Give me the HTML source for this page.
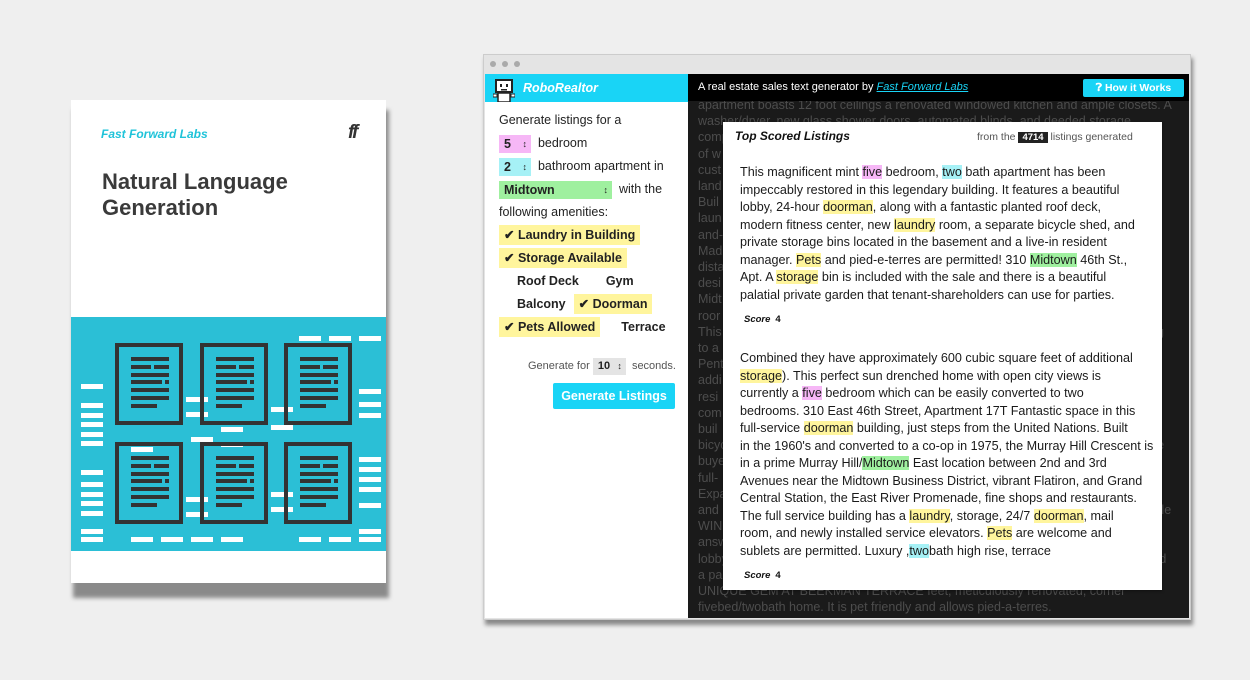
<!DOCTYPE html>
<html><head><meta charset="utf-8"><style>
*{margin:0;padding:0;box-sizing:border-box}
body{width:1250px;height:680px;background:#efefef;position:relative;overflow:hidden;font-family:"Liberation Sans",sans-serif}
.abs{position:absolute}
.y{background:#fff59d}.p{background:#f6b7f6}.c{background:#a6f1f6}.g{background:#9ff09f}
#side div.r{position:absolute;left:14px;font-size:12.5px;color:#222;height:20px;line-height:20px;white-space:nowrap}
.sel{display:inline-block;height:18px;line-height:18px;font-weight:bold;padding-left:5px;position:relative;vertical-align:middle}
.sel::after{content:"\2195";position:absolute;right:4px;font-size:9px;font-weight:normal}
.am{display:inline-block;font-weight:bold;padding:0 5px;height:20px;line-height:20px}
#bg{position:absolute;left:698px;top:97px;width:485px;height:519px;overflow:hidden;color:#4d4d4d;font-size:12.5px;line-height:16.2px;white-space:nowrap}
#modal{position:absolute;left:723px;top:122px;width:439px;height:468px;background:#fff;box-shadow:0 1px 3px rgba(0,0,0,.4)}
.txt{position:absolute;left:17px;width:420px;font-size:12.6px;line-height:17.55px;color:#1a1a1a;white-space:nowrap}
.score{position:absolute;left:21px;font-size:9.5px;font-style:italic;font-weight:bold;color:#111}
.score b{font-style:normal;margin-left:5px}
</style></head><body>

<!-- book -->
<div class="abs" style="left:73px;top:110px;width:316px;height:488px;background:#8a8a8a;filter:blur(2px)"></div>
<div class="abs" style="left:71px;top:100px;width:315px;height:483px;background:#fff"></div>
<div class="abs" style="left:101px;top:127px;font-size:12px;font-style:italic;font-weight:bold;color:#1fc3d9">Fast Forward Labs</div>
<div class="abs" style="left:348px;top:122px;font-size:19px;font-weight:bold;color:#333;letter-spacing:-2px;font-style:italic">ff</div>
<div class="abs" style="left:102px;top:169px;font-size:22px;font-weight:bold;color:#3a3a3a;line-height:26px">Natural Language<br>Generation</div>
<svg class="abs" style="left:71px;top:317px" width="315" height="234" viewBox="0 0 315 234">
<rect width="315" height="234" fill="#2bbfd6"/>
<g fill="#fff">
<rect x="10" y="67" width="22" height="5"/><rect x="10" y="86" width="22" height="5"/><rect x="10" y="96" width="22" height="5"/><rect x="10" y="105" width="22" height="5"/><rect x="10" y="115" width="22" height="5"/><rect x="10" y="124" width="22" height="5"/>
<rect x="10" y="153" width="22" height="5"/><rect x="10" y="165" width="22" height="5"/><rect x="10" y="175" width="22" height="5"/><rect x="10" y="184" width="22" height="5"/><rect x="10" y="194" width="22" height="5"/>
<rect x="10" y="212" width="22" height="5"/><rect x="10" y="220" width="22" height="5"/>
<rect x="228" y="19" width="22" height="5"/><rect x="258" y="19" width="22" height="5"/><rect x="288" y="19" width="22" height="5"/>
<rect x="288" y="72" width="22" height="5"/><rect x="288" y="85" width="22" height="5"/><rect x="288" y="96" width="22" height="5"/>
<rect x="288" y="140" width="22" height="5"/><rect x="288" y="150" width="22" height="5"/><rect x="288" y="160" width="22" height="5"/><rect x="288" y="170" width="22" height="5"/><rect x="288" y="186" width="22" height="5"/>
<rect x="288" y="212" width="22" height="5"/><rect x="288" y="220" width="22" height="5"/>
<rect x="60" y="220" width="22" height="5"/><rect x="90" y="220" width="22" height="5"/><rect x="120" y="220" width="22" height="5"/><rect x="150" y="220" width="22" height="5"/>
<rect x="228" y="220" width="22" height="5"/><rect x="258" y="220" width="22" height="5"/>
<rect x="115" y="80" width="22" height="5"/><rect x="115" y="95" width="22" height="5"/><rect x="200" y="90" width="22" height="5"/><rect x="200" y="108" width="22" height="5"/>
<rect x="115" y="180" width="22" height="5"/><rect x="115" y="195" width="22" height="5"/><rect x="200" y="175" width="22" height="5"/><rect x="200" y="190" width="22" height="5"/>
<rect x="150" y="110" width="22" height="5"/><rect x="120" y="120" width="22" height="5"/><rect x="60" y="130" width="22" height="5"/><rect x="150" y="125" width="22" height="5"/>
</g>
<g fill="none" stroke="#333" stroke-width="4">
<rect x="46" y="28" width="64" height="78"/><rect x="131" y="28" width="64" height="78"/><rect x="215" y="28" width="64" height="78"/>
<rect x="46" y="127" width="64" height="78"/><rect x="131" y="127" width="64" height="78"/><rect x="215" y="127" width="64" height="78"/>
</g>
<g fill="#333">
<g id="t"><rect x="60" y="40" width="38" height="4"/><rect x="60" y="48" width="20" height="4"/><rect x="83" y="48" width="15" height="4"/><rect x="60" y="56" width="38" height="4"/><rect x="60" y="63" width="31" height="4"/><rect x="94" y="63" width="4" height="4"/><rect x="60" y="71" width="38" height="4"/><rect x="60" y="79" width="38" height="4"/><rect x="60" y="87" width="26" height="4"/></g>
<use href="#t" x="85"/><use href="#t" x="169"/><use href="#t" y="99"/><use href="#t" x="85" y="99"/><use href="#t" x="169" y="99"/>
</g>
</svg>

<!-- browser -->
<div class="abs" style="left:485px;top:58px;width:708px;height:567px;background:#888;filter:blur(2px)"></div>
<div class="abs" style="left:483px;top:54px;width:708px;height:566px;background:#e4e4e4;border:1px solid #ccc"></div>
<div class="abs" style="left:490px;top:61px;width:6px;height:6px;border-radius:50%;background:#aaa;box-shadow:12px 0 #aaa,24px 0 #aaa"></div>
<div id="side" class="abs" style="left:485px;top:74px;width:203px;height:544px;background:#fff">
 <div class="abs" style="left:0;top:0;width:203px;height:28px;background:#19d4f6"></div>
 <svg class="abs" style="left:8px;top:4px" width="22" height="24" viewBox="0 0 22 24"><rect x="3" y="2" width="16" height="12" fill="#fff" stroke="#222" stroke-width="2"/><rect x="7" y="6" width="2" height="3" fill="#222"/><rect x="13" y="6" width="2" height="3" fill="#222"/><rect x="8" y="11" width="6" height="1.5" fill="#222"/><rect x="5" y="15" width="12" height="9" fill="#fff" stroke="#222" stroke-width="1.5"/><rect x="0" y="16" width="4" height="3" fill="#fff" stroke="#222"/><rect x="18" y="16" width="4" height="3" fill="#fff" stroke="#222"/></svg>
 <div class="abs" style="left:38px;top:7px;color:#fff;font-weight:bold;font-style:italic;font-size:12.5px">RoboRealtor</div>
 <div class="r" style="top:36px">Generate listings for a</div>
 <div class="r" style="top:59px"><span class="sel p" style="width:32px">5</span>&nbsp; bedroom</div>
 <div class="r" style="top:82px"><span class="sel c" style="width:32px">2</span>&nbsp; bathroom apartment in</div>
 <div class="r" style="top:105px"><span class="sel g" style="width:113px">Midtown</span>&nbsp; with the</div>
 <div class="r" style="top:128px">following amenities:</div>
 <div class="r" style="top:151px;left:14px"><span class="am y">✔ Laundry in Building</span></div>
 <div class="r" style="top:174px;left:14px"><span class="am y">✔ Storage Available</span></div>
 <div class="r" style="top:197px;left:14px"><span class="am" style="padding-left:18px">Roof Deck</span><span class="am" style="margin-left:17px">Gym</span></div>
 <div class="r" style="top:220px;left:14px"><span class="am" style="padding-left:18px">Balcony</span><span class="am y" style="margin-left:3px">✔ Doorman</span></div>
 <div class="r" style="top:243px;left:14px"><span class="am y">✔ Pets Allowed</span><span class="am" style="margin-left:16px">Terrace</span></div>
 <div class="r" style="top:282px;left:43px;font-size:11px;color:#555">Generate for <span class="sel" style="width:33px;background:#e4e4e4;color:#222;height:17px;line-height:17px">10</span>&nbsp; seconds.</div>
 <div class="abs" style="left:68px;top:309px;width:122px;height:26px;background:#19d4f6;color:#fff;font-weight:bold;font-size:12.5px;text-align:center;line-height:26px;border-radius:2px">Generate Listings</div>
</div>
<div class="abs" style="left:688px;top:74px;width:501px;height:544px;background:#1a1a1a"></div>
<div id="bg">apartment boasts 12 foot ceilings a renovated windowed kitchen and ample closets. A<br>washer/dryer, new glass shower doors, automated blinds, and deeded storage<br>complete this home. Located in a landmark building on a tree lined street just off<br>of w<br>cust<br>land<br>Buil<br>laun<br>and-<br>Mad<br>dista<br>desi<br>Midt<br>roor<br>This magnificent home is a short walk from everything. The building features parking<br>to a<br>Pent<br>addi<br>resi&nbsp;&nbsp;&nbsp;&nbsp;&nbsp;&nbsp;&nbsp;&nbsp;&nbsp;&nbsp;&nbsp;&nbsp;&nbsp;&nbsp;&nbsp;&nbsp;&nbsp;&nbsp;&nbsp;&nbsp;&nbsp;&nbsp;&nbsp;&nbsp;&nbsp;&nbsp;&nbsp;&nbsp;&nbsp;&nbsp;&nbsp;&nbsp;&nbsp;&nbsp;&nbsp;&nbsp;&nbsp;&nbsp;&nbsp;&nbsp;&nbsp;&nbsp;&nbsp;&nbsp;&nbsp;&nbsp;&nbsp;&nbsp;&nbsp;&nbsp;&nbsp;&nbsp;&nbsp;&nbsp;&nbsp;&nbsp;&nbsp;&nbsp;&nbsp;&nbsp;&nbsp;&nbsp;&nbsp;&nbsp;&nbsp;&nbsp;&nbsp;&nbsp;&nbsp;&nbsp;&nbsp;&nbsp;&nbsp;&nbsp;&nbsp;&nbsp;&nbsp;&nbsp;&nbsp;&nbsp;&nbsp;&nbsp;&nbsp;&nbsp;&nbsp;&nbsp;&nbsp;&nbsp;&nbsp;&nbsp;&nbsp;&nbsp;&nbsp;&nbsp;&nbsp;&nbsp;&nbsp;&nbsp;&nbsp;&nbsp;&nbsp;&nbsp;&nbsp;&nbsp;&nbsp;l<br>com<br>buil<br>bicycle room and a live-in resident manager, this home is perfect for the discerning e<br>buyer looking for an elegant home in one of the best locations in the city with a new<br>full-<br>Expansive living room with room for dining, a kitchen with great light and space, ce,<br>and a windowed bath. Pets are welcome, and washer dryers are permitted in this little<br>WINE<br>answ<br>lobby with 24 hour doorman, gym, laundry room, bike storage, roof deck, garden and<br>a pa<br>UNIQUE GEM AT BEEKMAN TERRACE feet, meticulously renovated, corner<br>fivebed/twobath home. It is pet friendly and allows pied-a-terres.</div>
<div class="abs" style="left:688px;top:74px;width:501px;height:27px;background:#000"></div>
<div class="abs" style="left:698px;top:81px;color:#fff;font-size:11px">A real estate sales text generator by <span style="color:#19d4f6;font-style:italic;text-decoration:underline">Fast Forward Labs</span></div>
<div class="abs" style="left:1083px;top:79px;width:101px;height:18px;background:#19d4f6;color:#fff;font-weight:bold;font-size:10.5px;line-height:18px;text-align:center;border-radius:2px">&#10067;&#xFE0E; How it Works</div>

<div id="modal">
 <div class="abs" style="left:12px;top:7px;font-weight:bold;font-style:italic;font-size:12px;color:#111">Top Scored Listings</div>
 <div class="abs" style="left:254px;top:9px;font-size:10.5px;color:#555">from the <span style="background:#222;color:#fff;font-weight:bold;padding:0 4px;font-size:9.5px">4714</span> listings generated</div>
 <div class="txt" style="top:42px">This magnificent mint <span class="p">five</span> bedroom, <span class="c">two</span> bath apartment has been<br>impeccably restored in this legendary building. It features a beautiful<br>lobby, 24-hour <span class="y">doorman</span>, along with a fantastic planted roof deck,<br>modern fitness center, new <span class="y">laundry</span> room, a separate bicycle shed, and<br>private storage bins located in the basement and a live-in resident<br>manager. <span class="y">Pets</span> and pied-e-terres are permitted! 310 <span class="g">Midtown</span> 46th St.,<br>Apt. A <span class="y">storage</span> bin is included with the sale and there is a beautiful<br>palatial private garden that tenant-shareholders can use for parties.</div>
 <div class="score" style="top:192px">Score<b>4</b></div>
 <div class="txt" style="top:228px">Combined they have approximately 600 cubic square feet of additional<br><span class="y">storage</span>). This perfect sun drenched home with open city views is<br>currently a <span class="p">five</span> bedroom which can be easily converted to two<br>bedrooms. 310 East 46th Street, Apartment 17T Fantastic space in this<br>full-service <span class="y">doorman</span> building, just steps from the United Nations. Built<br>in the 1960's and converted to a co-op in 1975, the Murray Hill Crescent is<br>in a prime Murray Hill/<span class="g">Midtown</span> East location between 2nd and 3rd<br>Avenues near the Midtown Business District, vibrant Flatiron, and Grand<br>Central Station, the East River Promenade, fine shops and restaurants.<br>The full service building has a <span class="y">laundry</span>, storage, 24/7 <span class="y">doorman</span>, mail<br>room, and newly installed service elevators. <span class="y">Pets</span> are welcome and<br>sublets are permitted. Luxury ,<span class="c">two</span>bath high rise, terrace</div>
 <div class="score" style="top:448px">Score<b>4</b></div>
</div>
</body></html>
